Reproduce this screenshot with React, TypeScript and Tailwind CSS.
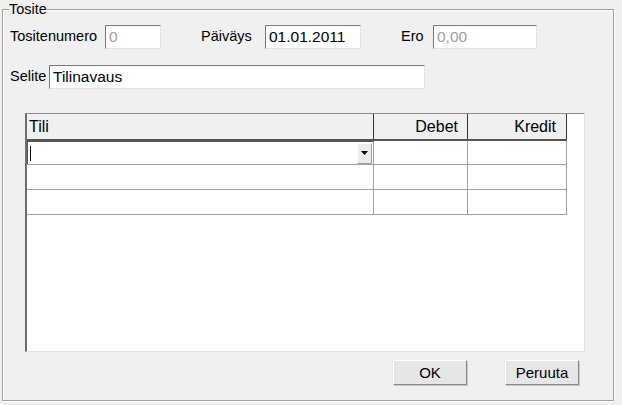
const font = { fontFamily: '"Liberation Sans", Arial, sans-serif' };

const Field = ({ value, width, disabled }: { value: string; width: string; disabled?: boolean }) => (
  <div
    className={`${width} h-[24px] flex items-center pl-[3px] bg-white border border-t-[#7a7a7a] border-l-[#7a7a7a] border-r-[#e3e3e3] border-b-[#e3e3e3] text-[15.5px] leading-none ${
      disabled ? "text-[#a0a0a0]" : "text-black"
    }`}
  >
    {value}
  </div>
);

const Button = ({ label }: { label: string }) => (
  <button className="w-[74px] h-[25px] flex items-center justify-center bg-[#e6e6e6] border border-t-white border-l-white border-r-[#8a8a8a] border-b-[#8a8a8a] shadow-[1px_1px_0_#c8c8c8] text-[15px] leading-none text-black">
    {label}
  </button>
);

const EmptyRow = () => (
  <div className="flex h-[25px] border-b border-[#a0a0a0]">
    <div className="w-[347px] border-r border-[#a0a0a0]" />
    <div className="w-[94px] border-r border-[#a0a0a0]" />
    <div className="w-[99px] border-r border-[#a0a0a0]" />
  </div>
);

export default function App() {
  return (
    <div className="w-[622px] h-[405px] bg-[#f0f0f0] pt-[1px] pl-[2px] text-black" style={font}>
      <fieldset className="w-[612px] h-[400px] border border-[#a0a0a0] shadow-[inset_1px_1px_0_#fff,1px_1px_0_#fff]">
        <legend className="ml-[6px] text-[14.5px] leading-[16px]">Tosite</legend>

        <div className="flex items-center pl-[7px] mt-[8px] text-[14.5px]">
          <span className="w-[95px]">Tositenumero</span>
          <Field value="0" width="w-[56px]" disabled />
          <span className="ml-[40px] w-[64px]">Päiväys</span>
          <Field value="01.01.2011" width="w-[96px]" />
          <span className="ml-[40px] w-[32px]">Ero</span>
          <Field value="0,00" width="w-[104px]" disabled />
        </div>

        <div className="flex items-center pl-[7px] mt-[16px] text-[14.5px]">
          <span className="w-[39px]">Selite</span>
          <Field value="Tilinavaus" width="w-[376px]" />
        </div>

        <div className="ml-[22px] mt-[24px] w-[560px] h-[239px] bg-white border-t border-l-2 border-r border-b border-t-[#8a8a8a] border-l-[#6e6e6e] border-r-[#e3e3e3] border-b-[#e3e3e3]">
          <div className="flex h-[27px] bg-[#f0f0f0] w-[540px] border-b-2 border-[#555] text-[16px] leading-none">
            <div className="w-[347px] flex items-center pl-[2px] border-r border-[#333]">Tili</div>
            <div className="w-[94px] flex items-center justify-end pr-[9px] border-r border-[#333]">Debet</div>
            <div className="w-[99px] flex items-center justify-end pr-[10px] border-r border-[#333]">Kredit</div>
          </div>

          <div className="flex h-[24px] border-b border-[#a0a0a0] w-[540px]">
            <div className="w-[347px] border-r border-[#a0a0a0] flex items-center pl-[2px] pr-[1px] border-l border-t border-l-[#555] border-t-[#555] bg-white">
              <div className="w-[1px] h-[15px] bg-black" />
              <div className="ml-auto w-[15px] h-[21px] bg-[#ececec] border border-t-white border-l-white border-r-[#a0a0a0] border-b-[#a0a0a0] flex items-center justify-center">
                <svg width="7" height="4" viewBox="0 0 7 4">
                  <path d="M0 0h7L3.5 4z" fill="#000" />
                </svg>
              </div>
            </div>
            <div className="w-[94px] border-r border-[#a0a0a0]" />
            <div className="w-[99px] border-r border-[#a0a0a0]" />
          </div>
          <div className="w-[540px]">
            <EmptyRow />
            <EmptyRow />
          </div>
        </div>

        <div className="flex justify-end gap-[38px] pr-[34px] mt-[8px]">
          <Button label="OK" />
          <Button label="Peruuta" />
        </div>
      </fieldset>
    </div>
  );
}
